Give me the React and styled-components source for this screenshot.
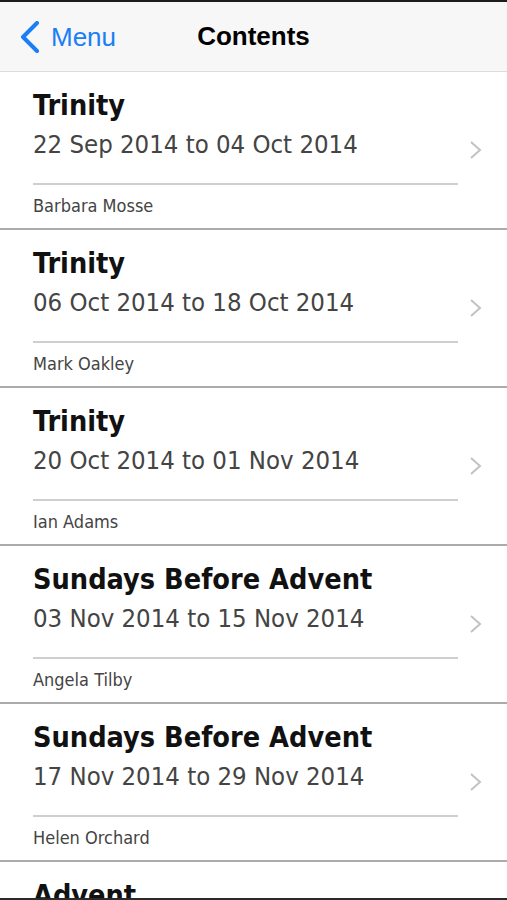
import React from "react"
import styled, { createGlobalStyle } from "styled-components"

const GlobalStyle = createGlobalStyle`
  html, body {
    margin: 0;
    padding: 0;
    background: #ffffff;
  }
`

const entries = [
  { season: "Trinity", dates: "22 Sep 2014 to 04 Oct 2014", author: "Barbara Mosse" },
  { season: "Trinity", dates: "06 Oct 2014 to 18 Oct 2014", author: "Mark Oakley" },
  { season: "Trinity", dates: "20 Oct 2014 to 01 Nov 2014", author: "Ian Adams" },
  { season: "Sundays Before Advent", dates: "03 Nov 2014 to 15 Nov 2014", author: "Angela Tilby" },
  { season: "Sundays Before Advent", dates: "17 Nov 2014 to 29 Nov 2014", author: "Helen Orchard" },
  { season: "Advent", dates: "01 Dec 2014 to 13 Dec 2014", author: "Graham James" },
]

const App = () => {
  return (
    <Screen>
      <GlobalStyle />
      <NavBar>
        <BackButton>
          <svg width="22" height="32" viewBox="0 0 22 32">
            <polyline
              points="18,2 4,16 18,30"
              fill="none"
              stroke="#1a7ef5"
              strokeWidth="4"
              strokeLinecap="round"
              strokeLinejoin="round"
            />
          </svg>
          <BackLabel>Menu</BackLabel>
        </BackButton>
        <NavTitle>Contents</NavTitle>
      </NavBar>
      <List>
        {entries.map((entry, i) => (
          <Row key={i}>
            <Content>
              <Season>{entry.season}</Season>
              <Dates>{entry.dates}</Dates>
              <Divider />
              <Author>{entry.author}</Author>
            </Content>
            <Disclosure>
              <svg width="14" height="20" viewBox="0 0 14 20">
                <polyline
                  points="2,2 11,10 2,18"
                  fill="none"
                  stroke="#c2c2c2"
                  strokeWidth="2"
                />
              </svg>
            </Disclosure>
          </Row>
        ))}
      </List>
    </Screen>
  )
}

export default App

const Screen = styled.div`
  width: 507px;
  height: 900px;
  box-sizing: border-box;
  border-top: 2px solid #1c1c1c;
  border-bottom: 2px solid #2a2a2a;
  overflow: hidden;
  display: flex;
  flex-direction: column;
  background: #ffffff;
`
const NavBar = styled.div`
  position: relative;
  height: 69px;
  flex-shrink: 0;
  background: #f7f7f7;
  border-bottom: 1px solid #dcdcdc;
  display: flex;
  align-items: center;
  justify-content: center;
`
const BackButton = styled.div`
  position: absolute;
  left: 19px;
  top: 19px;
  display: flex;
  align-items: center;
  gap: 10px;
`
const BackLabel = styled.span`
  font-family: "Liberation Sans", Arial, sans-serif;
  font-size: 26px;
  color: #1a7ef5;
`
const NavTitle = styled.span`
  font-family: "Liberation Sans", Arial, sans-serif;
  font-size: 26px;
  font-weight: bold;
  color: #000000;
`
const List = styled.div`
  display: flex;
  flex-direction: column;
`
const Row = styled.div`
  display: flex;
  align-items: center;
  padding: 16px 0 11px 33px;
  border-bottom: 2px solid #ababab;
`
const Content = styled.div`
  flex: 1;
  display: flex;
  flex-direction: column;
`
const Season = styled.div`
  font-family: "DejaVu Sans Condensed", "DejaVu Sans", sans-serif;
  font-weight: bold;
  font-size: 28.6px;
  line-height: 34px;
  color: #111111;
  white-space: nowrap;
`
const Dates = styled.div`
  font-family: "DejaVu Sans Condensed", "DejaVu Sans", sans-serif;
  font-size: 25.5px;
  line-height: 30px;
  margin-top: 7px;
  color: #444444;
`
const Divider = styled.div`
  height: 2px;
  background: #cfcfcf;
  margin-top: 24px;
`
const Author = styled.div`
  font-family: "DejaVu Sans Condensed", "DejaVu Sans", sans-serif;
  font-size: 18px;
  line-height: 22px;
  margin-top: 10px;
  color: #444444;
`
const Disclosure = styled.div`
  width: 49px;
  flex-shrink: 0;
  display: flex;
  justify-content: flex-start;
  padding-left: 11px;
  margin-bottom: 6px;
  box-sizing: border-box;
`
